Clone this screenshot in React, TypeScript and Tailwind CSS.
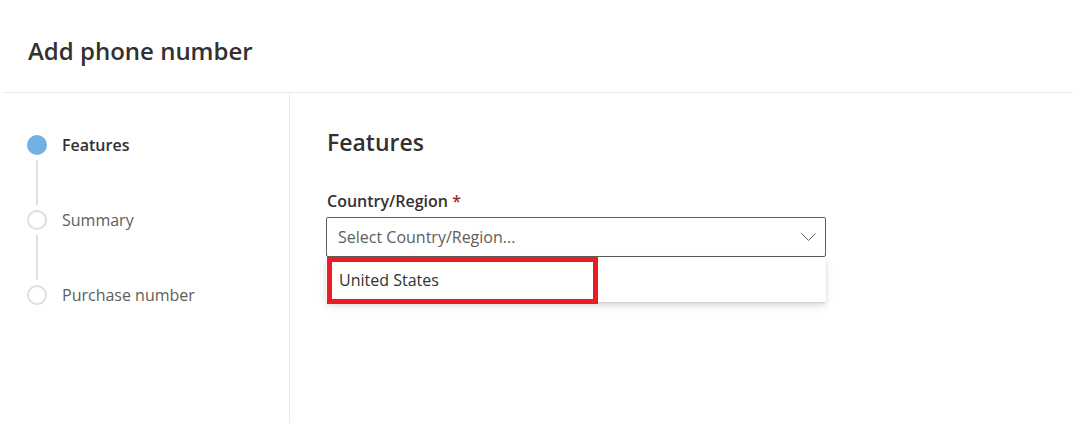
const steps = [
  { label: 'Features', active: true },
  { label: 'Summary', active: false },
  { label: 'Purchase number', active: false },
]

function Stepper() {
  return (
    <ol className="flex flex-col pl-[24px] pt-[42px]">
      {steps.map((step, i) => (
        <li key={step.label} className="flex gap-[15px]">
          <div className="flex w-[20px] flex-col items-center">
            {step.active ? (
              <span className="h-[20px] w-[20px] rounded-full bg-[#71afe5]" />
            ) : (
              <span className="h-[20px] w-[20px] rounded-full border-2 border-[#e1dfdd] bg-white" />
            )}
            {i < steps.length - 1 && <span className="my-[5px] h-[45px] w-[2px] bg-[#e1dfdd]" />}
          </div>
          <span
            className={
              step.active
                ? 'text-[16px] leading-[20px] font-semibold text-[#323130]'
                : 'text-[16px] leading-[20px] text-[#605e5c]'
            }
          >
            {step.label}
          </span>
        </li>
      ))}
    </ol>
  )
}

export default function App() {
  return (
    <div className="h-[423px] w-[1073px] overflow-hidden bg-white pl-[3px] font-['Segoe_UI','Open_Sans',sans-serif] text-[#323130]">
      <header className="flex h-[93px] items-center border-b border-[#edebe9] pl-[25px] pt-[10px]">
        <h1 className="text-[24px] leading-[32px] font-semibold text-[#323130]">Add phone number</h1>
      </header>

      <div className="flex h-[330px]">
        <aside className="w-[287px] border-r border-[#edebe9]">
          <Stepper />
        </aside>

        <main className="flex-1 pl-[36px] pt-[33px]">
          <h2 className="pl-px text-[23px] leading-[32px] font-semibold text-[#323130]">Features</h2>

          <div className="mt-[32px]">
            <label className="block pl-px text-[16px] leading-[22px] font-semibold text-[#323130]">
              Country/Region <span className="text-[#a4262c]">*</span>
            </label>
            <div className="relative mt-[5px] w-[500px]">
              <div className="flex h-[40px] items-center justify-between rounded-[2px] border border-[#605e5c] bg-white pl-[11px] pr-[9px]">
                <span className="text-[16px] text-[#605e5c]">Select Country/Region...</span>
                <svg width="15" height="8" viewBox="0 0 15 8" fill="none" className="mt-[-1px]">
                  <polyline points="0.5,0.5 7.5,7.5 14.5,0.5" stroke="#605e5c" strokeWidth="1" />
                </svg>
              </div>
              <div className="mt-px flex h-[44px] items-center rounded-[2px] bg-white pl-[13px] shadow-[0_3.2px_7.2px_rgba(0,0,0,0.132),0_0.6px_1.8px_rgba(0,0,0,0.108)]">
                <span className="text-[16px] text-[#323130]">United States</span>
              </div>
              <div className="absolute left-px top-[40px] h-[47px] w-[271px] border-[5px] border-[#ec1c24]" />
            </div>
          </div>
        </main>
      </div>
    </div>
  )
}
